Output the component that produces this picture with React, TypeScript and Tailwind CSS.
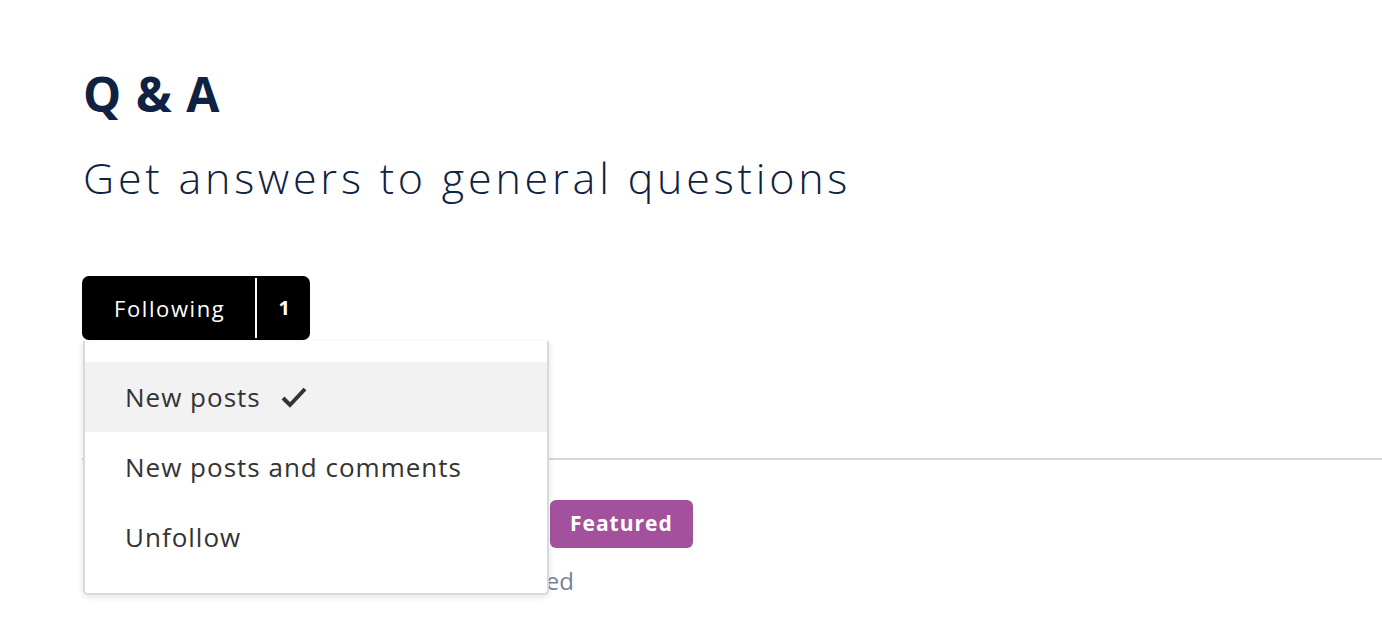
import React from "react";

export default function App() {
  const font = { fontFamily: '"Open Sans", "Noto Sans", sans-serif' };
  return (
    <div className="w-[1382px] h-[644px] bg-white overflow-hidden relative" style={font}>
      <div className="pl-[83px] pt-[64px]">
        <h1 className="text-[48px] leading-[60px] font-bold text-[#0f2242] tracking-[1px]">Q &amp; A</h1>
        <p className="mt-[28px] text-[43px] leading-[52px] font-light text-[#0f2242] tracking-[3.8px]">
          Get answers to general questions
        </p>
      </div>
      <div className="relative ml-[82px] mt-[72px] w-max">
        <button className="flex items-center h-[64px] bg-black text-white rounded-[7px]">
          <span className="pl-[32px] pr-[30px] text-[22px] tracking-[1.6px]">Following</span>
          <span className="w-[2px] self-stretch my-[2px] bg-white" />
          <span className="pl-[21px] pr-[20px] text-[20px] font-bold">1</span>
        </button>
        <div className="absolute left-[1px] top-[65px] z-10 w-[466px] bg-white border-2 border-[#d9d9d9] border-t-0 rounded-b-[5px] shadow-[0_2px_6px_rgba(0,0,0,0.12)] py-[21px] text-[#333]">
          <div className="h-[70px] flex items-center pl-[40px] bg-[#f2f2f2] text-[26px] tracking-[1px]">
            New posts
            <svg className="ml-[20px]" width="26" height="22" viewBox="0 0 26 22">
              <path d="M2 12 L9 19 L24 3" fill="none" stroke="#333" strokeWidth="4" />
            </svg>
          </div>
          <div className="h-[70px] flex items-center pl-[40px] text-[26px] tracking-[1px]">New posts and comments</div>
          <div className="h-[70px] flex items-center pl-[40px] text-[26px] tracking-[1px]">Unfollow</div>
        </div>
      </div>
      <div className="ml-[82px] mt-[118px] h-[2px] bg-[#d3d6e0]" />
      <div className="ml-[550px] mt-[40px] flex items-center">
        <span className="h-[48px] px-[20px] flex items-center rounded-[6px] bg-[#a4519d] text-white text-[21px] font-bold tracking-[1px]">Featured</span>
      </div>
      <div className="ml-[549px] w-[25px] mt-[18px] h-[30px] overflow-hidden flex justify-end whitespace-nowrap text-[24px] leading-[30px] text-[#7a8299]">
        Flagged
      </div>
    </div>
  );
}
